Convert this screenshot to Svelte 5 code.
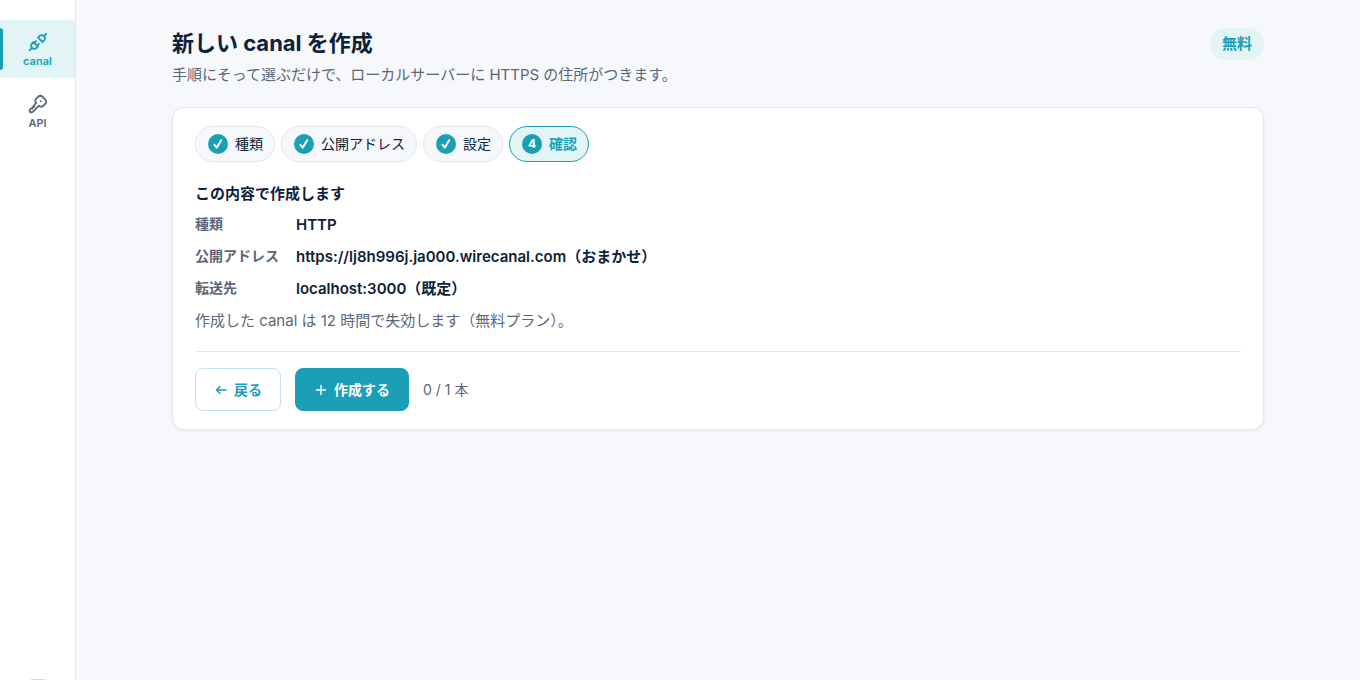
<script>
	const doneSteps = ['種類', '公開アドレス', '設定'];
	const summary = [
		{ label: '種類', value: 'HTTP' },
		{ label: '公開アドレス', value: 'https://lj8h996j.ja000.wirecanal.com（おまかせ）' },
		{ label: '転送先', value: 'localhost:3000（既定）' }
	];
</script>

<div class="app">
	<aside class="sidebar">
		<nav>
			<a href="#canal" class="item active" aria-current="page">
				<svg class="icon" viewBox="0 0 24 24" aria-hidden="true">
					<path d="M7 12l5 5l-1.5 1.5a3.536 3.536 0 1 1 -5 -5l1.5 -1.5" />
					<path d="M17 12l-5 -5l1.5 -1.5a3.536 3.536 0 1 1 5 5l-1.5 1.5" />
					<path d="M3 21l2.5 -2.5M18.5 5.5l2.5 -2.5M10 11l-2 2M13 14l-2 2" />
				</svg>
				<span>canal</span>
			</a>
			<a href="#api" class="item">
				<svg class="icon" viewBox="0 0 24 24" aria-hidden="true">
					<path
						d="M16.555 3.843l3.602 3.602a2.877 2.877 0 0 1 0 4.069l-2.643 2.643a2.877 2.877 0 0 1 -4.069 0l-.301 -.301l-6.558 6.558a2 2 0 0 1 -1.239 .578l-.175 .008h-1.172a1 1 0 0 1 -.993 -.883l-.007 -.117v-1.172a2 2 0 0 1 .467 -1.284l.119 -.13l.414 -.414h2v-2h2v-2l2.144 -2.144l-.301 -.301a2.877 2.877 0 0 1 0 -4.069l2.643 -2.643a2.877 2.877 0 0 1 4.069 0z"
					/>
					<path d="M15 9h.01" />
				</svg>
				<span>API</span>
			</a>
			<a href="#panel" class="item bottom" aria-label="パネル">
				<svg class="icon" viewBox="0 0 24 24" aria-hidden="true">
					<rect x="4" y="4" width="16" height="16" rx="1" />
				</svg>
			</a>
		</nav>
	</aside>

	<main>
		<header>
			<div>
				<h1>新しい canal を作成</h1>
				<p class="lead">手順にそって選ぶだけで、ローカルサーバーに HTTPS の住所がつきます。</p>
			</div>
			<span class="plan">無料</span>
		</header>

		<section class="card">
			<ol class="steps">
				{#each doneSteps as step}
					<li class="step">
						<span class="mark">
							<svg viewBox="0 0 20 20" aria-hidden="true">
								<path d="M6.5 10.8l2.3 2.8l4.400 -7.400" />
							</svg>
						</span>
						{step}
					</li>
				{/each}
				<li class="step current" aria-current="step">
					<span class="mark">4</span>
					確認
				</li>
			</ol>

			<h2>この内容で作成します</h2>
			<dl>
				{#each summary as row}
					<dt>{row.label}</dt>
					<dd>{row.value}</dd>
				{/each}
			</dl>
			<p class="note">作成した canal は 12 時間で失効します（無料プラン）。</p>

			<div class="actions">
				<button type="button" class="back">
					<svg viewBox="0 0 14 14" aria-hidden="true"><path d="M12 7H2.500M6 3.500L2.500 7L6 10.500" /></svg>
					戻る
				</button>
				<button type="button" class="create">
					<svg viewBox="0 0 14 14" aria-hidden="true"><path d="M7 2.500v9M2.500 7h9" /></svg>
					作成する
				</button>
				<span class="count">0 / 1 本</span>
			</div>
		</section>
	</main>
</div>

<style>
	:global(body) {
		margin: 0;
		background: #f6f8fc;
	}
	.app {
		display: flex;
		height: 100vh;
		overflow: hidden;
		color: #0b2239;
		font-family: Inter, 'Noto Sans CJK JP', sans-serif;
		font-size: 15px;
		line-height: 24px;
	}

	/* sidebar */
	.sidebar {
		box-sizing: border-box;
		flex: 0 0 76px;
		height: 100vh;
		overflow: hidden;
		background: #fff;
		border-right: 1px solid #e2e8f0;
	}
	nav {
		box-sizing: border-box;
		display: flex;
		flex-direction: column;
		gap: 4px;
		min-height: calc(100vh + 64px);
		padding: 20px 0;
	}
	.item {
		position: relative;
		box-sizing: border-box;
		display: flex;
		flex-direction: column;
		align-items: center;
		gap: 1px;
		height: 58px;
		padding-top: 11px;
		color: #5b6678;
		font-size: 11px;
		font-weight: 600;
		line-height: 14px;
		text-decoration: none;
	}
	.item.active {
		background: #e2f4f6;
		color: #1a9fb7;
	}
	.item.active::before {
		content: '';
		position: absolute;
		top: 8px;
		bottom: 8px;
		left: 0;
		width: 3px;
		border-radius: 0 3px 3px 0;
		background: #1a9fb7;
	}
	.item.bottom {
		margin-top: auto;
	}
	svg {
		fill: none;
		stroke: currentColor;
		stroke-width: 2;
		stroke-linecap: round;
		stroke-linejoin: round;
	}
	.icon {
		width: 22px;
		height: 22px;
	}

	/* content */
	main {
		box-sizing: border-box;
		flex: 1;
		max-width: 1140px;
		margin: 0 auto;
		padding: 27px 24px;
	}
	header {
		display: flex;
		justify-content: space-between;
		align-items: flex-start;
		margin-bottom: 20px;
	}
	h1 {
		margin: 0 0 3px;
		font-size: 22px;
		font-weight: 700;
		line-height: 33px;
	}
	.lead,
	.note {
		margin: 0;
		color: #5b6678;
	}
	.plan {
		margin-top: 1px;
		padding: 4px 12px;
		border-radius: 16px;
		background: #e2f4f6;
		color: #1a9fb7;
		font-weight: 700;
	}
	.card {
		padding: 18px 22px;
		background: #fff;
		border: 1px solid #e2e8f0;
		border-radius: 12px;
		box-shadow: 0 1px 3px rgba(11, 34, 57, 0.08);
	}
	.steps {
		display: flex;
		flex-wrap: wrap;
		gap: 6px;
		margin: 0 0 20px;
		padding: 0;
		list-style: none;
	}
	.step {
		display: flex;
		align-items: center;
		gap: 7px;
		padding: 6px 11px 6px 12px;
		border: 1px solid #e2e8f0;
		border-radius: 18px;
		background: #f6f8fc;
		font-size: 14px;
		line-height: 22px;
	}
	.step.current {
		border-color: #1a9fb7;
		background: #e2f4f6;
		color: #1a9fb7;
		font-weight: 600;
	}
	.mark {
		display: flex;
		justify-content: center;
		align-items: center;
		width: 20px;
		height: 20px;
		border-radius: 50%;
		background: #1a9fb7;
		color: #fff;
		font-size: 12px;
		font-weight: 700;
	}
	.mark svg {
		width: 20px;
		height: 20px;
	}
	h2 {
		margin: 0 0 7px;
		font-size: 15px;
		font-weight: 700;
		line-height: 24px;
	}
	dl {
		display: grid;
		grid-template-columns: max-content 1fr;
		gap: 8px 17px;
		margin: 0 0 8px;
	}
	dt {
		color: #5b6678;
		font-size: 14px;
		font-weight: 600;
		line-height: 22px;
	}
	dd {
		margin: 0;
		font-weight: 600;
	}
	.actions {
		display: flex;
		align-items: center;
		gap: 14px;
		margin-top: 18px;
		padding-top: 16px;
		border-top: 1px solid #e2e8f0;
	}
	button {
		display: flex;
		align-items: center;
		gap: 6px;
		padding: 9px 18px;
		border: 1px solid #1a9fb7;
		border-radius: 8px;
		font: inherit;
		font-size: 14px;
		font-weight: 700;
		line-height: 23px;
		cursor: pointer;
	}
	button svg {
		width: 14px;
		height: 14px;
		stroke-width: 1.4;
	}
	.back {
		border-color: #c5dff0;
		background: #fff;
		color: #1a9fb7;
	}
	.create {
		background: #1a9fb7;
		color: #fff;
	}
	.count {
		color: #5b6678;
		font-size: 14px;
		line-height: 23px;
	}
</style>
